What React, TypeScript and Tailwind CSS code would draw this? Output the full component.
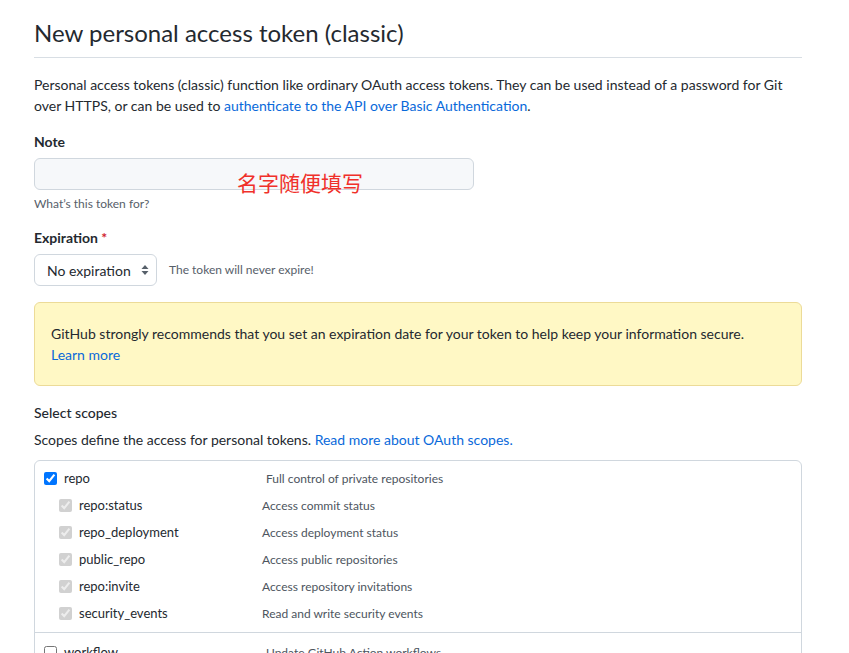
import React from "react";

const font = { fontFamily: 'Lato, "Noto Sans", "Noto Sans CJK SC", sans-serif' };

function Row({ label, desc, sub, checked, disabled }: { label: string; desc: string; sub?: boolean; checked?: boolean; disabled?: boolean }) {
  return (
    <div className={`flex items-center h-[27px] ${sub ? "pl-[24px]" : "pl-[9px]"}`}>
      <input type="checkbox" checked={checked} disabled={disabled} readOnly className="m-0 w-[13px] h-[13px]" />
      <span className={`ml-[7px] text-[13px] text-[#24292f] ${sub ? "w-[183px]" : "w-[202px]"}`}>{label}</span>
      <span className="text-[12px] text-[#4d555e]">{desc}</span>
    </div>
  );
}

export default function App() {
  return (
    <div className="w-[849px] h-[653px] overflow-hidden bg-white text-[#24292f]" style={font}>
      <div className="ml-[34px] w-[768px]">
        <div className="pt-[16px] pb-[7px] border-b border-[#d8dee4]">
          <h1 className="text-[24px] leading-[34px] font-normal">New personal access token (classic)</h1>
        </div>
        <p className="mt-[16px] text-[14px] leading-[21px]">
          Personal access tokens (classic) function like ordinary OAuth access tokens. They can be used instead of a password for Git over HTTPS, or can be used to{" "}
          <span className="text-[#0969da]">authenticate to the API over Basic Authentication</span>.
        </p>
        <div className="mt-[15px] text-[14px] leading-[21px] font-bold">Note</div>
        <div className="relative mt-[6px] w-[440px] h-[32px] rounded-[6px] border border-[#d0d7de] bg-[#f6f8fa]">
          <span className="absolute left-[202px] top-[9px] text-[21px] leading-[28px] text-[#f0302a] whitespace-nowrap" style={{ fontFamily: '"Noto Sans CJK SC", sans-serif' }}>名字随便填写</span>
        </div>
        <div className="mt-[5px] text-[12px] leading-[18px] text-[#57606a]">What’s this token for?</div>
        <div className="mt-[14px] text-[14px] leading-[21px] font-bold">
          Expiration <span className="text-[#cf222e]">*</span>
        </div>
        <div className="mt-[6px] flex items-center">
          <div className="flex items-center justify-between w-[123px] h-[32px] rounded-[6px] border border-[#d0d7de] bg-white pl-[12px] pr-[7px]">
            <span className="text-[14px]">No expiration</span>
            <svg width="8" height="12" viewBox="0 0 8 12" fill="#57606a">
              <path d="M4 1 L7.5 5 H0.5 Z" />
              <path d="M4 11 L7.5 7 H0.5 Z" />
            </svg>
          </div>
          <span className="ml-[12px] text-[12px] text-[#57606a]">The token will never expire!</span>
        </div>
        <div className="mt-[16px] rounded-[6px] border border-[#ecdb98] bg-[#fff8c5] px-[16px] py-[20px] text-[14px] leading-[21px]">
          GitHub strongly recommends that you set an expiration date for your token to help keep your information secure.
          <br />
          <span className="text-[#0969da]">Learn more</span>
        </div>
        <div className="mt-[16px] text-[14px] leading-[21px] font-medium">Select scopes</div>
        <div className="mt-[6px] text-[14px] leading-[21px]">
          Scopes define the access for personal tokens. <span className="text-[#0969da]">Read more about OAuth scopes.</span>
        </div>
        <div className="mt-[10px] rounded-[6px] border border-[#d0d7de]">
          <div className="pt-[4px] pb-[5px] border-b border-[#d0d7de]">
            <Row label="repo" desc="Full control of private repositories" checked />
            <Row sub label="repo:status" desc="Access commit status" checked disabled />
            <Row sub label="repo_deployment" desc="Access deployment status" checked disabled />
            <Row sub label="public_repo" desc="Access public repositories" checked disabled />
            <Row sub label="repo:invite" desc="Access repository invitations" checked disabled />
            <Row sub label="security_events" desc="Read and write security events" checked disabled />
          </div>
          <div className="pt-[6px] pb-[4px]">
            <Row label="workflow" desc="Update GitHub Action workflows" />
          </div>
        </div>
      </div>
    </div>
  );
}
